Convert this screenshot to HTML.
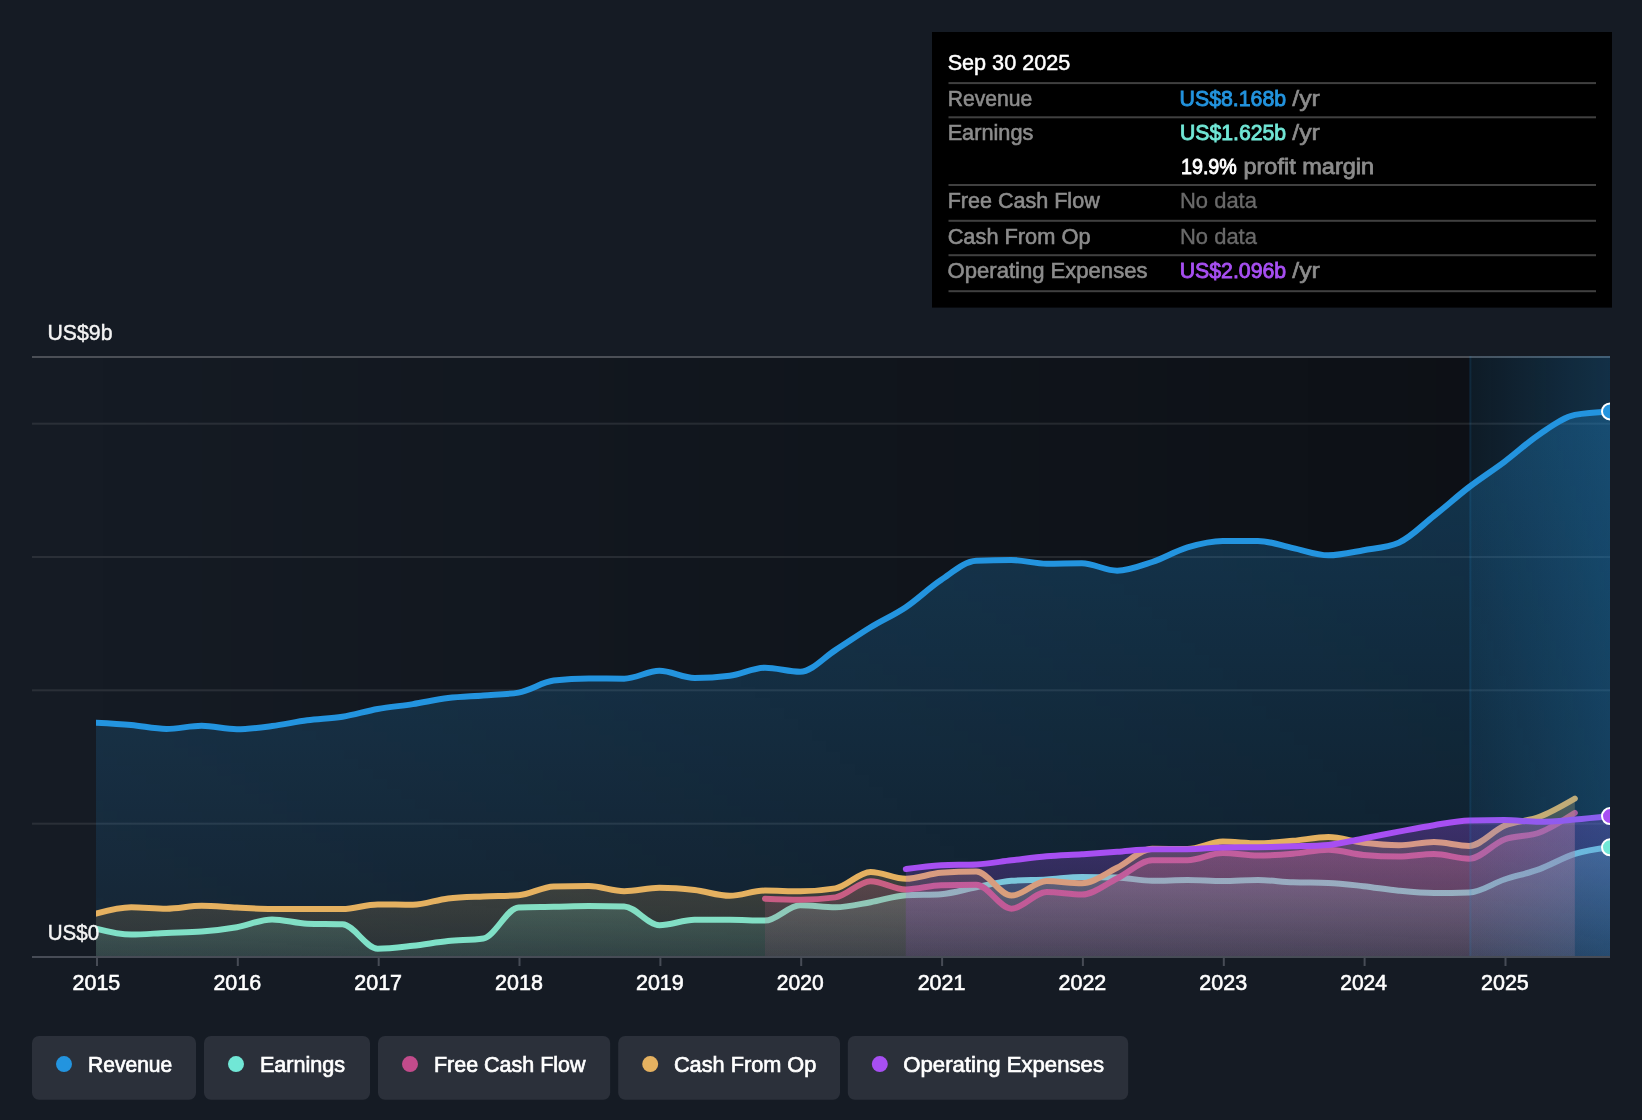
<!DOCTYPE html>
<html lang="en"><head><meta charset="utf-8"><title>Earnings and Revenue History</title>
<style>
html,body{margin:0;padding:0;background:#151b24;}
body{width:1642px;height:1120px;overflow:hidden;position:relative;}
svg{position:absolute;left:0;top:0;display:block;will-change:transform;}
text{font-family:'Liberation Sans', sans-serif;}
.m{stroke-width:0.45px;paint-order:stroke;}
</style></head><body>
<svg width="1642" height="1120" viewBox="0 0 1642 1120">
<defs>
<clipPath id="plot"><rect x="96" y="340" width="1514" height="640"/></clipPath>
<linearGradient id="past" x1="0" y1="0" x2="1" y2="0"><stop offset="0" stop-color="#000" stop-opacity="0"/><stop offset="1" stop-color="#000" stop-opacity="0.38"/></linearGradient>
<linearGradient id="recent" x1="0" y1="0" x2="1" y2="0"><stop offset="0" stop-color="#2394df" stop-opacity="0.08"/><stop offset="1" stop-color="#2394df" stop-opacity="0.24"/></linearGradient>
<linearGradient id="g_rev" x1="0" y1="0" x2="0" y2="1"><stop offset="0" stop-color="#2394df" stop-opacity="0.29"/><stop offset="1" stop-color="#2394df" stop-opacity="0.09"/></linearGradient>
<linearGradient id="g_earn" x1="0" y1="0" x2="0" y2="1"><stop offset="0" stop-color="#71e7d6" stop-opacity="0.3"/><stop offset="1" stop-color="#71e7d6" stop-opacity="0.1"/></linearGradient>
<linearGradient id="g_fcf" x1="0" y1="0" x2="0" y2="1"><stop offset="0" stop-color="#c24b8b" stop-opacity="0.3"/><stop offset="1" stop-color="#c24b8b" stop-opacity="0.1"/></linearGradient>
<linearGradient id="g_cfo" x1="0" y1="0" x2="0" y2="1"><stop offset="0" stop-color="#e5b160" stop-opacity="0.3"/><stop offset="1" stop-color="#e5b160" stop-opacity="0.1"/></linearGradient>
<linearGradient id="g_opex" x1="0" y1="0" x2="0" y2="1"><stop offset="0" stop-color="#a74ff2" stop-opacity="0.3"/><stop offset="1" stop-color="#a74ff2" stop-opacity="0.1"/></linearGradient>
</defs>
<rect x="96" y="358" width="1374" height="598" fill="url(#past)"/>
<rect x="1470" y="358" width="140" height="598" fill="#000" fill-opacity="0.38"/>
<rect x="32" y="422.7" width="1578" height="2" fill="#ffffff" fill-opacity="0.09"/>
<rect x="32" y="556.0" width="1578" height="2" fill="#ffffff" fill-opacity="0.09"/>
<rect x="32" y="689.3" width="1578" height="2" fill="#ffffff" fill-opacity="0.09"/>
<rect x="32" y="822.7" width="1578" height="2" fill="#ffffff" fill-opacity="0.09"/>
<rect x="32" y="356" width="1578" height="2" fill="#ffffff" fill-opacity="0.23"/>
<g clip-path="url(#plot)">
<path d="M96.00,722.70C107.74,723.33,119.47,723.97,131.21,725.00C142.95,726.03,154.68,728.90,166.42,728.90C178.16,728.90,189.89,725.80,201.63,725.80C213.37,725.80,225.10,729.20,236.84,729.20C248.58,729.20,260.31,727.58,272.05,726.10C283.79,724.62,295.52,721.85,307.26,720.30C319.00,718.75,330.73,718.68,342.47,716.80C354.21,714.92,365.94,711.12,377.68,709.00C389.42,706.88,401.15,705.92,412.89,704.10C424.63,702.28,436.36,699.53,448.10,698.10C459.84,696.67,471.57,696.42,483.31,695.50C495.05,694.58,506.78,694.53,518.52,692.60C530.26,690.67,541.99,682.07,553.73,680.60C565.47,679.13,577.20,678.40,588.94,678.40C600.68,678.40,612.41,678.70,624.15,678.70C635.89,678.70,647.62,670.80,659.36,670.80C671.10,670.80,682.83,678.00,694.57,678.00C706.31,678.00,718.04,677.27,729.78,675.80C741.52,674.33,753.25,667.70,764.99,667.70C776.73,667.70,788.46,671.70,800.20,671.70C811.94,671.70,823.67,657.50,835.41,650.10C847.15,642.70,858.88,634.45,870.62,627.30C882.36,620.15,894.09,615.08,905.83,607.20C917.57,599.32,929.30,587.73,941.04,580.00C952.78,572.27,964.51,561.33,976.25,560.80C987.99,560.27,999.72,560.00,1011.46,560.00C1023.20,560.00,1034.93,563.70,1046.67,563.70C1058.41,563.70,1070.14,563.30,1081.88,563.30C1093.62,563.30,1105.35,570.70,1117.09,570.70C1128.83,570.70,1140.56,565.88,1152.30,562.00C1164.04,558.12,1175.77,550.92,1187.51,547.40C1199.25,543.88,1210.98,540.90,1222.72,540.90C1234.46,540.90,1246.19,540.90,1257.93,540.90C1269.67,540.90,1281.40,545.70,1293.14,548.10C1304.88,550.50,1316.61,555.30,1328.35,555.30C1340.09,555.30,1351.82,552.30,1363.56,550.20C1375.30,548.10,1387.03,547.70,1398.77,542.70C1410.51,537.70,1422.24,525.18,1433.98,515.90C1445.72,506.62,1457.45,496.02,1469.19,487.00C1480.93,477.98,1492.66,470.60,1504.40,461.80C1516.14,453.00,1527.87,442.02,1539.61,434.20C1551.35,426.38,1563.08,417.23,1574.82,414.90C1586.56,412.57,1598.29,411.98,1610.03,411.40L1610.03,957.00 L96.00,957.00 Z" fill="url(#g_rev)"/>
<path d="M96.00,722.70C107.74,723.33,119.47,723.97,131.21,725.00C142.95,726.03,154.68,728.90,166.42,728.90C178.16,728.90,189.89,725.80,201.63,725.80C213.37,725.80,225.10,729.20,236.84,729.20C248.58,729.20,260.31,727.58,272.05,726.10C283.79,724.62,295.52,721.85,307.26,720.30C319.00,718.75,330.73,718.68,342.47,716.80C354.21,714.92,365.94,711.12,377.68,709.00C389.42,706.88,401.15,705.92,412.89,704.10C424.63,702.28,436.36,699.53,448.10,698.10C459.84,696.67,471.57,696.42,483.31,695.50C495.05,694.58,506.78,694.53,518.52,692.60C530.26,690.67,541.99,682.07,553.73,680.60C565.47,679.13,577.20,678.40,588.94,678.40C600.68,678.40,612.41,678.70,624.15,678.70C635.89,678.70,647.62,670.80,659.36,670.80C671.10,670.80,682.83,678.00,694.57,678.00C706.31,678.00,718.04,677.27,729.78,675.80C741.52,674.33,753.25,667.70,764.99,667.70C776.73,667.70,788.46,671.70,800.20,671.70C811.94,671.70,823.67,657.50,835.41,650.10C847.15,642.70,858.88,634.45,870.62,627.30C882.36,620.15,894.09,615.08,905.83,607.20C917.57,599.32,929.30,587.73,941.04,580.00C952.78,572.27,964.51,561.33,976.25,560.80C987.99,560.27,999.72,560.00,1011.46,560.00C1023.20,560.00,1034.93,563.70,1046.67,563.70C1058.41,563.70,1070.14,563.30,1081.88,563.30C1093.62,563.30,1105.35,570.70,1117.09,570.70C1128.83,570.70,1140.56,565.88,1152.30,562.00C1164.04,558.12,1175.77,550.92,1187.51,547.40C1199.25,543.88,1210.98,540.90,1222.72,540.90C1234.46,540.90,1246.19,540.90,1257.93,540.90C1269.67,540.90,1281.40,545.70,1293.14,548.10C1304.88,550.50,1316.61,555.30,1328.35,555.30C1340.09,555.30,1351.82,552.30,1363.56,550.20C1375.30,548.10,1387.03,547.70,1398.77,542.70C1410.51,537.70,1422.24,525.18,1433.98,515.90C1445.72,506.62,1457.45,496.02,1469.19,487.00C1480.93,477.98,1492.66,470.60,1504.40,461.80C1516.14,453.00,1527.87,442.02,1539.61,434.20C1551.35,426.38,1563.08,417.23,1574.82,414.90C1586.56,412.57,1598.29,411.98,1610.03,411.40" fill="none" stroke="#2394df" stroke-width="6" stroke-linecap="round" stroke-linejoin="round"/>
<path d="M96.00,928.60C107.74,931.60,119.47,934.60,131.21,934.60C142.95,934.60,154.68,933.42,166.42,932.90C178.16,932.38,189.89,932.43,201.63,931.50C213.37,930.57,225.10,929.22,236.84,927.20C248.58,925.18,260.31,919.40,272.05,919.40C283.79,919.40,295.52,923.30,307.26,923.70C319.00,924.10,330.73,923.90,342.47,924.30C354.21,924.70,365.94,948.70,377.68,948.70C389.42,948.70,401.15,947.07,412.89,945.80C424.63,944.53,436.36,942.32,448.10,941.10C459.84,939.88,471.57,940.23,483.31,938.50C495.05,936.77,506.78,907.80,518.52,907.40C530.26,907.00,541.99,907.03,553.73,906.80C565.47,906.57,577.20,906.00,588.94,906.00C600.68,906.00,612.41,906.13,624.15,906.40C635.89,906.67,647.62,925.20,659.36,925.20C671.10,925.20,682.83,919.80,694.57,919.80C706.31,919.80,718.04,919.80,729.78,919.80C741.52,919.80,753.25,920.60,764.99,920.60C776.73,920.60,788.46,905.20,800.20,905.20C811.94,905.20,823.67,907.30,835.41,907.30C847.15,907.30,858.88,904.22,870.62,902.20C882.36,900.18,894.09,895.87,905.83,895.20C917.57,894.53,929.30,894.87,941.04,894.20C952.78,893.53,964.51,889.43,976.25,887.20C987.99,884.97,999.72,881.73,1011.46,880.80C1023.20,879.87,1034.93,880.05,1046.67,879.40C1058.41,878.75,1070.14,876.90,1081.88,876.90C1093.62,876.90,1105.35,877.10,1117.09,877.50C1128.83,877.90,1140.56,880.80,1152.30,880.80C1164.04,880.80,1175.77,880.00,1187.51,880.00C1199.25,880.00,1210.98,881.00,1222.72,881.00C1234.46,881.00,1246.19,880.00,1257.93,880.00C1269.67,880.00,1281.40,881.90,1293.14,882.30C1304.88,882.70,1316.61,882.50,1328.35,882.90C1340.09,883.30,1351.82,884.90,1363.56,886.20C1375.30,887.50,1387.03,889.57,1398.77,890.70C1410.51,891.83,1422.24,893.00,1433.98,893.00C1445.72,893.00,1457.45,892.83,1469.19,892.50C1480.93,892.17,1492.66,883.40,1504.40,879.50C1516.14,875.60,1527.87,873.37,1539.61,869.10C1551.35,864.83,1563.08,857.53,1574.82,853.90C1586.56,850.27,1598.29,848.78,1610.03,847.30L1610.03,957.00 L96.00,957.00 Z" fill="url(#g_earn)"/>
<path d="M96.00,928.60C107.74,931.60,119.47,934.60,131.21,934.60C142.95,934.60,154.68,933.42,166.42,932.90C178.16,932.38,189.89,932.43,201.63,931.50C213.37,930.57,225.10,929.22,236.84,927.20C248.58,925.18,260.31,919.40,272.05,919.40C283.79,919.40,295.52,923.30,307.26,923.70C319.00,924.10,330.73,923.90,342.47,924.30C354.21,924.70,365.94,948.70,377.68,948.70C389.42,948.70,401.15,947.07,412.89,945.80C424.63,944.53,436.36,942.32,448.10,941.10C459.84,939.88,471.57,940.23,483.31,938.50C495.05,936.77,506.78,907.80,518.52,907.40C530.26,907.00,541.99,907.03,553.73,906.80C565.47,906.57,577.20,906.00,588.94,906.00C600.68,906.00,612.41,906.13,624.15,906.40C635.89,906.67,647.62,925.20,659.36,925.20C671.10,925.20,682.83,919.80,694.57,919.80C706.31,919.80,718.04,919.80,729.78,919.80C741.52,919.80,753.25,920.60,764.99,920.60C776.73,920.60,788.46,905.20,800.20,905.20C811.94,905.20,823.67,907.30,835.41,907.30C847.15,907.30,858.88,904.22,870.62,902.20C882.36,900.18,894.09,895.87,905.83,895.20C917.57,894.53,929.30,894.87,941.04,894.20C952.78,893.53,964.51,889.43,976.25,887.20C987.99,884.97,999.72,881.73,1011.46,880.80C1023.20,879.87,1034.93,880.05,1046.67,879.40C1058.41,878.75,1070.14,876.90,1081.88,876.90C1093.62,876.90,1105.35,877.10,1117.09,877.50C1128.83,877.90,1140.56,880.80,1152.30,880.80C1164.04,880.80,1175.77,880.00,1187.51,880.00C1199.25,880.00,1210.98,881.00,1222.72,881.00C1234.46,881.00,1246.19,880.00,1257.93,880.00C1269.67,880.00,1281.40,881.90,1293.14,882.30C1304.88,882.70,1316.61,882.50,1328.35,882.90C1340.09,883.30,1351.82,884.90,1363.56,886.20C1375.30,887.50,1387.03,889.57,1398.77,890.70C1410.51,891.83,1422.24,893.00,1433.98,893.00C1445.72,893.00,1457.45,892.83,1469.19,892.50C1480.93,892.17,1492.66,883.40,1504.40,879.50C1516.14,875.60,1527.87,873.37,1539.61,869.10C1551.35,864.83,1563.08,857.53,1574.82,853.90C1586.56,850.27,1598.29,848.78,1610.03,847.30" fill="none" stroke="#71e7d6" stroke-width="6" stroke-linecap="round" stroke-linejoin="round"/>
<path d="M764.99,898.70C776.73,899.20,788.46,899.70,800.20,899.70C811.94,899.70,823.67,898.93,835.41,897.40C847.15,895.87,858.88,881.20,870.62,881.20C882.36,881.20,894.09,889.40,905.83,889.40C917.57,889.40,929.30,885.53,941.04,885.20C952.78,884.87,964.51,884.70,976.25,884.70C987.99,884.70,999.72,908.70,1011.46,908.70C1023.20,908.70,1034.93,892.10,1046.67,892.10C1058.41,892.10,1070.14,894.60,1081.88,894.60C1093.62,894.60,1105.35,884.22,1117.09,878.50C1128.83,872.78,1140.56,860.30,1152.30,860.30C1164.04,860.30,1175.77,860.30,1187.51,860.30C1199.25,860.30,1210.98,853.10,1222.72,853.10C1234.46,853.10,1246.19,855.60,1257.93,855.60C1269.67,855.60,1281.40,854.67,1293.14,853.70C1304.88,852.73,1316.61,849.80,1328.35,849.80C1340.09,849.80,1351.82,853.93,1363.56,855.00C1375.30,856.07,1387.03,856.60,1398.77,856.60C1410.51,856.60,1422.24,854.10,1433.98,854.10C1445.72,854.10,1457.45,858.70,1469.19,858.70C1480.93,858.70,1492.66,843.87,1504.40,839.50C1516.14,835.13,1527.87,836.93,1539.61,832.50C1551.35,828.07,1563.08,820.48,1574.82,812.90L1574.82,957.00 L764.99,957.00 Z" fill="url(#g_fcf)"/>
<path d="M764.99,898.70C776.73,899.20,788.46,899.70,800.20,899.70C811.94,899.70,823.67,898.93,835.41,897.40C847.15,895.87,858.88,881.20,870.62,881.20C882.36,881.20,894.09,889.40,905.83,889.40C917.57,889.40,929.30,885.53,941.04,885.20C952.78,884.87,964.51,884.70,976.25,884.70C987.99,884.70,999.72,908.70,1011.46,908.70C1023.20,908.70,1034.93,892.10,1046.67,892.10C1058.41,892.10,1070.14,894.60,1081.88,894.60C1093.62,894.60,1105.35,884.22,1117.09,878.50C1128.83,872.78,1140.56,860.30,1152.30,860.30C1164.04,860.30,1175.77,860.30,1187.51,860.30C1199.25,860.30,1210.98,853.10,1222.72,853.10C1234.46,853.10,1246.19,855.60,1257.93,855.60C1269.67,855.60,1281.40,854.67,1293.14,853.70C1304.88,852.73,1316.61,849.80,1328.35,849.80C1340.09,849.80,1351.82,853.93,1363.56,855.00C1375.30,856.07,1387.03,856.60,1398.77,856.60C1410.51,856.60,1422.24,854.10,1433.98,854.10C1445.72,854.10,1457.45,858.70,1469.19,858.70C1480.93,858.70,1492.66,843.87,1504.40,839.50C1516.14,835.13,1527.87,836.93,1539.61,832.50C1551.35,828.07,1563.08,820.48,1574.82,812.90" fill="none" stroke="#c24b8b" stroke-width="6" stroke-linecap="round" stroke-linejoin="round"/>
<path d="M96.00,913.60C107.74,910.40,119.47,907.20,131.21,907.20C142.95,907.20,154.68,908.70,166.42,908.70C178.16,908.70,189.89,905.80,201.63,905.80C213.37,905.80,225.10,907.08,236.84,907.60C248.58,908.12,260.31,908.90,272.05,908.90C283.79,908.90,295.52,908.90,307.26,908.90C319.00,908.90,330.73,909.10,342.47,909.10C354.21,909.10,365.94,904.40,377.68,904.40C389.42,904.40,401.15,904.80,412.89,904.80C424.63,904.80,436.36,899.73,448.10,898.40C459.84,897.07,471.57,896.92,483.31,896.40C495.05,895.88,506.78,896.03,518.52,895.30C530.26,894.57,541.99,886.77,553.73,886.50C565.47,886.23,577.20,886.10,588.94,886.10C600.68,886.10,612.41,891.20,624.15,891.20C635.89,891.20,647.62,887.80,659.36,887.80C671.10,887.80,682.83,888.67,694.57,890.00C706.31,891.33,718.04,895.80,729.78,895.80C741.52,895.80,753.25,890.50,764.99,890.50C776.73,890.50,788.46,891.30,800.20,891.30C811.94,891.30,823.67,890.33,835.41,888.40C847.15,886.47,858.88,872.00,870.62,872.00C882.36,872.00,894.09,878.80,905.83,878.80C917.57,878.80,929.30,873.60,941.04,872.80C952.78,872.00,964.51,871.60,976.25,871.60C987.99,871.60,999.72,895.60,1011.46,895.60C1023.20,895.60,1034.93,881.00,1046.67,881.00C1058.41,881.00,1070.14,883.30,1081.88,883.30C1093.62,883.30,1105.35,873.45,1117.09,867.70C1128.83,861.95,1140.56,848.80,1152.30,848.80C1164.04,848.80,1175.77,849.00,1187.51,849.00C1199.25,849.00,1210.98,841.60,1222.72,841.60C1234.46,841.60,1246.19,843.30,1257.93,843.30C1269.67,843.30,1281.40,841.83,1293.14,840.80C1304.88,839.77,1316.61,837.10,1328.35,837.10C1340.09,837.10,1351.82,841.43,1363.56,842.80C1375.30,844.17,1387.03,845.30,1398.77,845.30C1410.51,845.30,1422.24,842.00,1433.98,842.00C1445.72,842.00,1457.45,845.90,1469.19,845.90C1480.93,845.90,1492.66,830.65,1504.40,825.80C1516.14,820.95,1527.87,821.33,1539.61,816.80C1551.35,812.27,1563.08,805.43,1574.82,798.60L1574.82,957.00 L96.00,957.00 Z" fill="url(#g_cfo)"/>
<path d="M96.00,913.60C107.74,910.40,119.47,907.20,131.21,907.20C142.95,907.20,154.68,908.70,166.42,908.70C178.16,908.70,189.89,905.80,201.63,905.80C213.37,905.80,225.10,907.08,236.84,907.60C248.58,908.12,260.31,908.90,272.05,908.90C283.79,908.90,295.52,908.90,307.26,908.90C319.00,908.90,330.73,909.10,342.47,909.10C354.21,909.10,365.94,904.40,377.68,904.40C389.42,904.40,401.15,904.80,412.89,904.80C424.63,904.80,436.36,899.73,448.10,898.40C459.84,897.07,471.57,896.92,483.31,896.40C495.05,895.88,506.78,896.03,518.52,895.30C530.26,894.57,541.99,886.77,553.73,886.50C565.47,886.23,577.20,886.10,588.94,886.10C600.68,886.10,612.41,891.20,624.15,891.20C635.89,891.20,647.62,887.80,659.36,887.80C671.10,887.80,682.83,888.67,694.57,890.00C706.31,891.33,718.04,895.80,729.78,895.80C741.52,895.80,753.25,890.50,764.99,890.50C776.73,890.50,788.46,891.30,800.20,891.30C811.94,891.30,823.67,890.33,835.41,888.40C847.15,886.47,858.88,872.00,870.62,872.00C882.36,872.00,894.09,878.80,905.83,878.80C917.57,878.80,929.30,873.60,941.04,872.80C952.78,872.00,964.51,871.60,976.25,871.60C987.99,871.60,999.72,895.60,1011.46,895.60C1023.20,895.60,1034.93,881.00,1046.67,881.00C1058.41,881.00,1070.14,883.30,1081.88,883.30C1093.62,883.30,1105.35,873.45,1117.09,867.70C1128.83,861.95,1140.56,848.80,1152.30,848.80C1164.04,848.80,1175.77,849.00,1187.51,849.00C1199.25,849.00,1210.98,841.60,1222.72,841.60C1234.46,841.60,1246.19,843.30,1257.93,843.30C1269.67,843.30,1281.40,841.83,1293.14,840.80C1304.88,839.77,1316.61,837.10,1328.35,837.10C1340.09,837.10,1351.82,841.43,1363.56,842.80C1375.30,844.17,1387.03,845.30,1398.77,845.30C1410.51,845.30,1422.24,842.00,1433.98,842.00C1445.72,842.00,1457.45,845.90,1469.19,845.90C1480.93,845.90,1492.66,830.65,1504.40,825.80C1516.14,820.95,1527.87,821.33,1539.61,816.80C1551.35,812.27,1563.08,805.43,1574.82,798.60" fill="none" stroke="#e5b160" stroke-width="6" stroke-linecap="round" stroke-linejoin="round"/>
<path d="M905.83,869.10C917.57,867.42,929.30,865.73,941.04,865.20C952.78,864.67,964.51,864.93,976.25,864.40C987.99,863.87,999.72,861.65,1011.46,860.30C1023.20,858.95,1034.93,857.30,1046.67,856.30C1058.41,855.30,1070.14,855.05,1081.88,854.30C1093.62,853.55,1105.35,852.65,1117.09,851.80C1128.83,850.95,1140.56,849.20,1152.30,849.20C1164.04,849.20,1175.77,849.20,1187.51,849.20C1199.25,849.20,1210.98,847.70,1222.72,847.50C1234.46,847.30,1246.19,847.40,1257.93,847.20C1269.67,847.00,1281.40,846.68,1293.14,846.30C1304.88,845.92,1316.61,845.83,1328.35,844.90C1340.09,843.97,1351.82,840.72,1363.56,838.50C1375.30,836.28,1387.03,833.82,1398.77,831.60C1410.51,829.38,1422.24,827.05,1433.98,825.20C1445.72,823.35,1457.45,820.83,1469.19,820.50C1480.93,820.17,1492.66,820.00,1504.40,820.00C1516.14,820.00,1527.87,821.80,1539.61,821.80C1551.35,821.80,1563.08,820.55,1574.82,819.60C1586.56,818.65,1598.29,817.38,1610.03,816.10L1610.03,957.00 L905.83,957.00 Z" fill="url(#g_opex)"/>
<path d="M905.83,869.10C917.57,867.42,929.30,865.73,941.04,865.20C952.78,864.67,964.51,864.93,976.25,864.40C987.99,863.87,999.72,861.65,1011.46,860.30C1023.20,858.95,1034.93,857.30,1046.67,856.30C1058.41,855.30,1070.14,855.05,1081.88,854.30C1093.62,853.55,1105.35,852.65,1117.09,851.80C1128.83,850.95,1140.56,849.20,1152.30,849.20C1164.04,849.20,1175.77,849.20,1187.51,849.20C1199.25,849.20,1210.98,847.70,1222.72,847.50C1234.46,847.30,1246.19,847.40,1257.93,847.20C1269.67,847.00,1281.40,846.68,1293.14,846.30C1304.88,845.92,1316.61,845.83,1328.35,844.90C1340.09,843.97,1351.82,840.72,1363.56,838.50C1375.30,836.28,1387.03,833.82,1398.77,831.60C1410.51,829.38,1422.24,827.05,1433.98,825.20C1445.72,823.35,1457.45,820.83,1469.19,820.50C1480.93,820.17,1492.66,820.00,1504.40,820.00C1516.14,820.00,1527.87,821.80,1539.61,821.80C1551.35,821.80,1563.08,820.55,1574.82,819.60C1586.56,818.65,1598.29,817.38,1610.03,816.10" fill="none" stroke="#a74ff2" stroke-width="6" stroke-linecap="round" stroke-linejoin="round"/>
<rect x="1469.4" y="356" width="140.6" height="601" fill="url(#recent)"/>
<rect x="1469.4" y="356" width="2" height="601" fill="#2394df" fill-opacity="0.12"/>
<circle cx="1610.0" cy="411.4" r="8" fill="#2394df" stroke="#ffffff" stroke-width="2"/>
<circle cx="1610.0" cy="847.3" r="8" fill="#71e7d6" stroke="#ffffff" stroke-width="2"/>
<circle cx="1610.0" cy="816.1" r="8" fill="#a74ff2" stroke="#ffffff" stroke-width="2"/>
</g>
<rect x="32" y="956" width="1578" height="2" fill="#474c56"/>
<rect x="96.0" y="957" width="2" height="9" fill="#474c56"/>
<rect x="236.8" y="957" width="2" height="9" fill="#474c56"/>
<rect x="377.7" y="957" width="2" height="9" fill="#474c56"/>
<rect x="518.5" y="957" width="2" height="9" fill="#474c56"/>
<rect x="659.4" y="957" width="2" height="9" fill="#474c56"/>
<rect x="800.2" y="957" width="2" height="9" fill="#474c56"/>
<rect x="941.1" y="957" width="2" height="9" fill="#474c56"/>
<rect x="1081.9" y="957" width="2" height="9" fill="#474c56"/>
<rect x="1222.8" y="957" width="2" height="9" fill="#474c56"/>
<rect x="1363.6" y="957" width="2" height="9" fill="#474c56"/>
<rect x="1504.5" y="957" width="2" height="9" fill="#474c56"/>
<rect x="932" y="32" width="680" height="275.6" fill="#000000"/>
<rect x="948.5" y="82.1" width="647.5" height="2" fill="#404040"/>
<rect x="948.5" y="116.3" width="647.5" height="2" fill="#404040"/>
<rect x="948.5" y="184.0" width="647.5" height="2" fill="#404040"/>
<rect x="948.5" y="219.8" width="647.5" height="2" fill="#404040"/>
<rect x="948.5" y="254.2" width="647.5" height="2" fill="#404040"/>
<rect x="948.5" y="290.2" width="647.5" height="2" fill="#404040"/>
<rect x="32.0" y="1036" width="164.0" height="63.8" rx="7" fill="#2b303a"/>
<circle cx="64.0" cy="1064.1" r="8" fill="#2394df"/>
<rect x="204.0" y="1036" width="166.0" height="63.8" rx="7" fill="#2b303a"/>
<circle cx="236.0" cy="1064.1" r="8" fill="#71e7d6"/>
<rect x="378.0" y="1036" width="232.2" height="63.8" rx="7" fill="#2b303a"/>
<circle cx="410.0" cy="1064.1" r="8" fill="#c24b8b"/>
<rect x="618.2" y="1036" width="221.8" height="63.8" rx="7" fill="#2b303a"/>
<circle cx="650.2" cy="1064.1" r="8" fill="#e5b160"/>
<rect x="847.8" y="1036" width="280.4" height="63.8" rx="7" fill="#2b303a"/>
<circle cx="879.8" cy="1064.1" r="8" fill="#a74ff2"/>
<text x="47.56" y="339.5" font-size="22.5" fill="#f4f4f4" stroke="#f4f4f4" stroke-width="0.45" textLength="64.89" lengthAdjust="spacingAndGlyphs">US$9b</text>
<text x="47.79" y="939.6" font-size="22.5" fill="#f4f4f4" stroke="#f4f4f4" stroke-width="0.45" textLength="51.38" lengthAdjust="spacingAndGlyphs">US$0</text>
<text x="947.64" y="69.5" font-size="22.5" fill="#ffffff" stroke="#ffffff" stroke-width="0.5" textLength="122.66" lengthAdjust="spacingAndGlyphs">Sep 30 2025</text>
<text x="947.66" y="105.8" font-size="22.5" fill="#8c8c8c" stroke="#8c8c8c" stroke-width="0.6" textLength="84.65" lengthAdjust="spacingAndGlyphs">Revenue</text>
<text x="1179.55" y="105.8" font-size="22.5" fill="#2394df" stroke="#2394df" stroke-width="0.9" textLength="106.61" lengthAdjust="spacingAndGlyphs">US$8.168b</text>
<text x="1292.30" y="105.8" font-size="22.5" fill="#8c8c8c" stroke="#8c8c8c" stroke-width="0.6" textLength="27.60" lengthAdjust="spacingAndGlyphs">/yr</text>
<text x="947.63" y="139.6" font-size="22.5" fill="#8c8c8c" stroke="#8c8c8c" stroke-width="0.6" textLength="85.75" lengthAdjust="spacingAndGlyphs">Earnings</text>
<text x="1179.96" y="139.6" font-size="22.5" fill="#71e7d6" stroke="#71e7d6" stroke-width="0.9" textLength="106.20" lengthAdjust="spacingAndGlyphs">US$1.625b</text>
<text x="1292.30" y="139.6" font-size="22.5" fill="#8c8c8c" stroke="#8c8c8c" stroke-width="0.6" textLength="27.60" lengthAdjust="spacingAndGlyphs">/yr</text>
<text x="1181.03" y="173.6" font-size="22.5" fill="#ffffff" stroke="#ffffff" stroke-width="0.9" textLength="55.81" lengthAdjust="spacingAndGlyphs">19.9%</text>
<text x="1243.45" y="173.6" font-size="22.5" fill="#8c8c8c" stroke="#8c8c8c" stroke-width="0.8" textLength="130.74" lengthAdjust="spacingAndGlyphs">profit margin</text>
<text x="947.64" y="207.6" font-size="22.5" fill="#8c8c8c" stroke="#8c8c8c" stroke-width="0.6" textLength="152.06" lengthAdjust="spacingAndGlyphs">Free Cash Flow</text>
<text x="1180.02" y="207.6" font-size="22.5" fill="#6a6a6a" stroke="#6a6a6a" stroke-width="0.35" textLength="76.89" lengthAdjust="spacingAndGlyphs">No data</text>
<text x="947.63" y="243.6" font-size="22.5" fill="#8c8c8c" stroke="#8c8c8c" stroke-width="0.6" textLength="142.90" lengthAdjust="spacingAndGlyphs">Cash From Op</text>
<text x="1180.02" y="243.6" font-size="22.5" fill="#6a6a6a" stroke="#6a6a6a" stroke-width="0.35" textLength="76.89" lengthAdjust="spacingAndGlyphs">No data</text>
<text x="947.62" y="277.6" font-size="22.5" fill="#8c8c8c" stroke="#8c8c8c" stroke-width="0.6" textLength="199.84" lengthAdjust="spacingAndGlyphs">Operating Expenses</text>
<text x="1179.65" y="277.6" font-size="22.5" fill="#a74ff2" stroke="#a74ff2" stroke-width="0.9" textLength="106.51" lengthAdjust="spacingAndGlyphs">US$2.096b</text>
<text x="1292.30" y="277.6" font-size="22.5" fill="#8c8c8c" stroke="#8c8c8c" stroke-width="0.6" textLength="27.60" lengthAdjust="spacingAndGlyphs">/yr</text>
<text x="88.06" y="1071.8" font-size="22.5" fill="#ffffff" stroke="#ffffff" stroke-width="0.7" textLength="84.24" lengthAdjust="spacingAndGlyphs">Revenue</text>
<text x="259.94" y="1071.8" font-size="22.5" fill="#ffffff" stroke="#ffffff" stroke-width="0.7" textLength="85.24" lengthAdjust="spacingAndGlyphs">Earnings</text>
<text x="433.95" y="1071.8" font-size="22.5" fill="#ffffff" stroke="#ffffff" stroke-width="0.7" textLength="151.56" lengthAdjust="spacingAndGlyphs">Free Cash Flow</text>
<text x="673.93" y="1071.8" font-size="22.5" fill="#ffffff" stroke="#ffffff" stroke-width="0.7" textLength="142.39" lengthAdjust="spacingAndGlyphs">Cash From Op</text>
<text x="903.32" y="1071.8" font-size="22.5" fill="#ffffff" stroke="#ffffff" stroke-width="0.7" textLength="200.65" lengthAdjust="spacingAndGlyphs">Operating Expenses</text>
<text x="72.55" y="989.5" font-size="22.5" fill="#ffffff" stroke="#ffffff" stroke-width="0.6" textLength="47.77" lengthAdjust="spacingAndGlyphs">2015</text>
<text x="213.40" y="989.5" font-size="22.5" fill="#ffffff" stroke="#ffffff" stroke-width="0.6" textLength="47.77" lengthAdjust="spacingAndGlyphs">2016</text>
<text x="354.25" y="989.5" font-size="22.5" fill="#ffffff" stroke="#ffffff" stroke-width="0.6" textLength="47.77" lengthAdjust="spacingAndGlyphs">2017</text>
<text x="495.10" y="989.5" font-size="22.5" fill="#ffffff" stroke="#ffffff" stroke-width="0.6" textLength="47.77" lengthAdjust="spacingAndGlyphs">2018</text>
<text x="635.95" y="989.5" font-size="22.5" fill="#ffffff" stroke="#ffffff" stroke-width="0.6" textLength="47.77" lengthAdjust="spacingAndGlyphs">2019</text>
<text x="776.82" y="989.5" font-size="22.5" fill="#ffffff" stroke="#ffffff" stroke-width="0.6" textLength="46.79" lengthAdjust="spacingAndGlyphs">2020</text>
<text x="917.65" y="989.5" font-size="22.5" fill="#ffffff" stroke="#ffffff" stroke-width="0.6" textLength="47.77" lengthAdjust="spacingAndGlyphs">2021</text>
<text x="1058.50" y="989.5" font-size="22.5" fill="#ffffff" stroke="#ffffff" stroke-width="0.6" textLength="47.77" lengthAdjust="spacingAndGlyphs">2022</text>
<text x="1199.35" y="989.5" font-size="22.5" fill="#ffffff" stroke="#ffffff" stroke-width="0.6" textLength="47.77" lengthAdjust="spacingAndGlyphs">2023</text>
<text x="1340.22" y="989.5" font-size="22.5" fill="#ffffff" stroke="#ffffff" stroke-width="0.6" textLength="46.79" lengthAdjust="spacingAndGlyphs">2024</text>
<text x="1481.05" y="989.5" font-size="22.5" fill="#ffffff" stroke="#ffffff" stroke-width="0.6" textLength="47.77" lengthAdjust="spacingAndGlyphs">2025</text>
</svg>
</body></html>
